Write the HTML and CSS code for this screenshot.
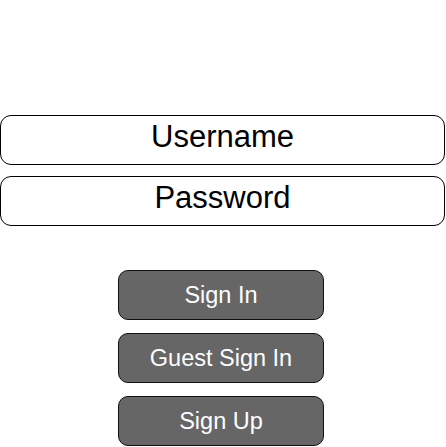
FILE: index.html
```html
<!DOCTYPE html>
<html>
<head>
<meta charset="utf-8">
<link rel="stylesheet" href="styles.css">
</head>
<body>
<div class="page">
  <div class="fields">
    <div class="field">Username</div>
    <div class="field">Password</div>
  </div>
  <div class="buttons">
    <div class="btn">Sign In</div>
    <div class="btn">Guest Sign In</div>
    <div class="btn">Sign Up</div>
  </div>
</div>
</body>
</html>
```
FILE: styles.css
```css
html, body {
  margin: 0;
  padding: 0;
  background: #fff;
}
.page {
  display: flex;
  flex-direction: column;
  padding-top: 115px;
  font-family: "Liberation Sans", Arial, sans-serif;
}
.fields {
  display: flex;
  flex-direction: column;
  gap: 11px;
}
.field {
  box-sizing: border-box;
  width: 445px;
  height: 50px;
  border: 1px solid #000;
  border-radius: 11px;
  display: flex;
  justify-content: center;
  padding-top: 3px;
  font-size: 31px;
  color: #000;
}
.buttons {
  display: flex;
  flex-direction: column;
  gap: 13px;
  margin-top: 44px;
  padding-left: 118px;
}
.btn {
  box-sizing: border-box;
  width: 206px;
  height: 50px;
  background: #666;
  border: 1px solid #111;
  border-radius: 10px;
  color: #fff;
  font-size: 23.5px;
  display: flex;
  align-items: center;
  justify-content: center;
}
```
